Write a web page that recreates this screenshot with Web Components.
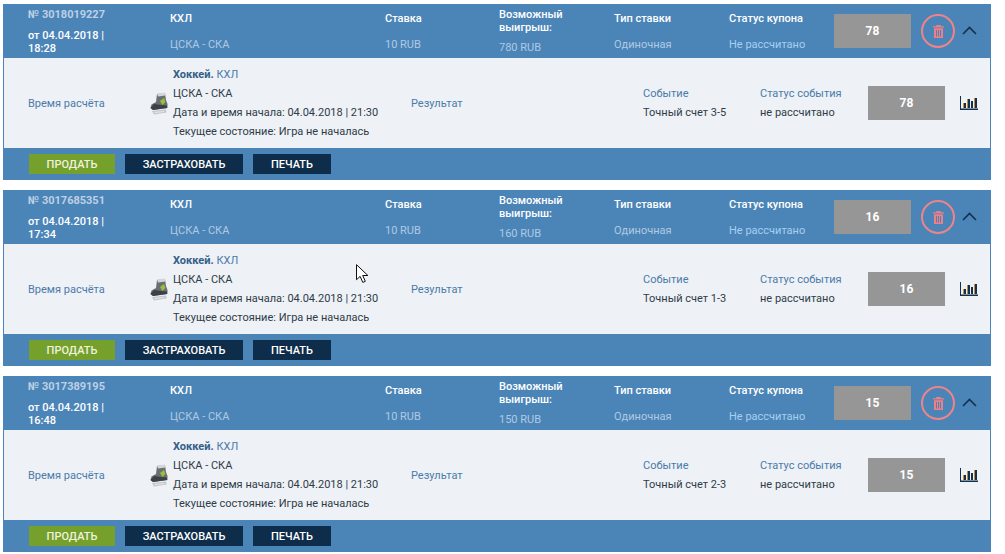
<!DOCTYPE html>
<html lang="ru">

<head>
  <meta charset="UTF-8">
  <title>Купоны</title>
  <style>
    html, body { margin: 0; background: #fff; }
    body { padding: 4px 0 0 3px; width: 988px; font-family: Roboto, "Liberation Sans", sans-serif; }
  </style>
</head>

<body>
  <coupon-list></coupon-list>

  <template id="coupon-card">
    <style>
      :host { display: block; width: 988px; height: 176px; font: 11px/19px Roboto, "Liberation Sans", sans-serif; color: #2e3c48; }
      .head { height: 54px; background: #4b85b8; display: grid; grid-template-columns: 142px 215px 114px 115px 115px 105px 77px 44px 30px; padding-left: 25px; box-sizing: border-box; color: #fff; font-weight: 500; }
      .head .cell { display: flex; flex-direction: column; justify-content: space-between; padding: 5px 0 4px; box-sizing: border-box; height: 54px; }
      .pale { color: #b0c9e2; font-weight: 400; }
      .pale.status { color: #a6cff0; }
      .head .first { padding: 4px 0 3px; }
      .num { color: #bed0e4; font-weight: 700; line-height: 13px; }
      .date { line-height: 13px; }
      .head .win { padding: 4px 0 1px; }
      .win .t { line-height: 13px; }
      .score { background: #969696; color: #fff; font-weight: 700; font-size: 12px; display: flex; align-items: center; justify-content: center; height: 34px; }
      .head .score { align-self: center; }
      .tools { display: flex; align-items: center; padding-left: 10px; }
      .trash { width: 34px; height: 34px; box-sizing: border-box; border: 2px solid #ee8488; border-radius: 50%; display: flex; align-items: center; justify-content: center; flex: none; }
      .chev { display: flex; align-items: center; padding: 0 0 0 7px; }
      .body { height: 90px; background: #eef1f5; border: solid #4b85b8; border-width: 0 1px; box-sizing: border-box; display: grid; grid-template-columns: 121px 24px 238px 232px 117px 108px 77px 33px; padding-left: 24px; align-items: center; }
      .blue { color: #4a7bab; }
      .skate { display: flex; align-items: center; margin-left: 1px; }
      .match b { color: #345f8b; font-weight: 700; }
      .chart { display: flex; justify-content: flex-end; }
      .foot { height: 32px; background: #4b85b8; display: flex; align-items: center; gap: 10px; padding-left: 26px; }
    </style>
    <div class="head">
      <div class="cell first">
        <span class="num" id="num"></span>
        <span class="date" id="date"></span>
      </div>
      <div class="cell"><span>КХЛ</span><span class="pale">ЦСКА - СКА</span></div>
      <div class="cell"><span>Ставка</span><span class="pale">10 RUB</span></div>
      <div class="cell win"><span class="t">Возможный<br>выигрыш:</span><span class="pale" id="win"></span></div>
      <div class="cell"><span>Тип ставки</span><span class="pale">Одиночная</span></div>
      <div class="cell"><span>Статус купона</span><span class="pale status">Не рассчитано</span></div>
      <div class="score" id="score1"></div>
      <div class="tools">
        <div class="trash">
          <svg width="11" height="13" viewBox="0 0 11 13"><path fill="#ee7f86" d="M3.500 0h4l.5 1.200h3v1.300H0V1.200h3zM1 3.300h9V13H1zM3 5v6.500h1V5zm2 0v6.500h1V5zm2 0v6.500h1V5z"/></svg>
        </div>
      </div>
      <div class="chev">
        <svg width="15" height="9" viewBox="0 0 15 9" style="margin-top:-2px"><path d="M1 8l6.500-6.500L14 8" fill="none" stroke="#14304f" stroke-width="1.600"/></svg>
      </div>
    </div>
    <div class="body">
      <div class="blue">Время расчёта</div>
      <div class="skate">
        <svg width="18" height="23" viewBox="0 0 18 23">
          <path fill="#6a6f72" d="M7 2l8-1 1 7 1.500 4v4L3 18 .5 16l1-3.500L6 10z"/>
          <path fill="#d3d7da" d="M7 1.500L15 .5l.4 3-7.400 1z"/>
          <path fill="#3c4144" d="M4 12l7 1 6 .5V16L3 18 .5 16z"/>
          <path fill="#9dbd3c" d="M10 9l4-3 1.500 4-3 3z"/>
          <path fill="#c2c7ca" d="M2 19l14-1.500.5 3L4 22.500z"/>
          <path fill="#e6e9eb" d="M4 20l10-1 .3 1-9.500 1z"/>
        </svg>
      </div>
      <div class="match">
        <div><b>Хоккей.</b> <span class="blue">КХЛ</span></div>
        <div>ЦСКА - СКА</div>
        <div>Дата и время начала: 04.04.2018 | 21:30</div>
        <div>Текущее состояние: Игра не началась</div>
      </div>
      <div class="blue">Результат</div>
      <div>
        <div class="blue">Событие</div>
        <div id="exact"></div>
      </div>
      <div>
        <div class="blue">Статус события</div>
        <div>не рассчитано</div>
      </div>
      <div class="score" id="score2"></div>
      <div class="chart">
        <svg width="18" height="14" viewBox="0 0 18 14">
          <path fill="#14304f" d="M0 0h1v12.500h17V14H0z"/>
          <path fill="#14304f" d="M4 7h2v5H4zM8 3h2v9H8zM11 5h2v7h-2zM15 2h2v10h-2z"/>
          <path fill="#c98a3a" d="M3 7h1v5H3zM7 3h1v9H7zM14 2h1v10h-1z"/>
        </svg>
      </div>
    </div>
    <div class="foot">
      <action-button kind="green" style="width:86px">ПРОДАТЬ</action-button>
      <action-button style="width:118px">ЗАСТРАХОВАТЬ</action-button>
      <action-button style="width:78px">ПЕЧАТЬ</action-button>
    </div>
  </template>

  <script>
    class ActionButton extends HTMLElement {
      constructor() {
        super();
        this.attachShadow({ mode: "open" }).innerHTML = `
          <style>
            :host { display: block; height: 20px; background: #0e2d4a; color: #fff; font: 500 11px/21px Roboto, "Liberation Sans", sans-serif; text-align: center; }
            :host([kind="green"]) { background: #76a02c; color: #eef3df; }
          </style>
          <slot></slot>`;
      }
    }

    class CouponCard extends HTMLElement {
      constructor() {
        super();
        const template = document.querySelector("template#coupon-card");
        this.attachShadow({ mode: "open" }).appendChild(template.content.cloneNode(true));
      }

      connectedCallback() {
        const root = this.shadowRoot;
        const score = this.getAttribute("score");
        root.querySelector("#num").textContent = "№ " + this.getAttribute("number");
        root.querySelector("#date").innerHTML = "от 04.04.2018 |<br>" + this.getAttribute("time");
        root.querySelector("#win").textContent = this.getAttribute("win") + " RUB";
        root.querySelector("#score1").textContent = score;
        root.querySelector("#score2").textContent = score;
        root.querySelector("#exact").textContent = "Точный счет " + this.getAttribute("exact");
      }
    }

    class CouponList extends HTMLElement {
      constructor() {
        super();
        const coupons = [
          ["3018019227", "18:28", "780", "78", "3-5"],
          ["3017685351", "17:34", "160", "16", "1-3"],
          ["3017389195", "16:48", "150", "15", "2-3"],
        ];
        this.attachShadow({ mode: "open" }).innerHTML = `
          <style>
            :host { display: flex; flex-direction: column; gap: 10px; position: relative; }
            .cursor { position: absolute; left: 353px; top: 260px; }
          </style>
          ${coupons.map(c => `<coupon-card number="${c[0]}" time="${c[1]}" win="${c[2]}" score="${c[3]}" exact="${c[4]}"></coupon-card>`).join("")}
          <svg class="cursor" width="14" height="21" viewBox="0 0 14 21"><path d="M.5.700v15l3.600-3.300 2.700 6 2.500-1.100-2.600-5.800h5.200z" fill="#fff" stroke="#111" stroke-width="1"/></svg>`;
      }
    }

    customElements.define("action-button", ActionButton);
    customElements.define("coupon-card", CouponCard);
    customElements.define("coupon-list", CouponList);
  </script>
</body>

</html>
